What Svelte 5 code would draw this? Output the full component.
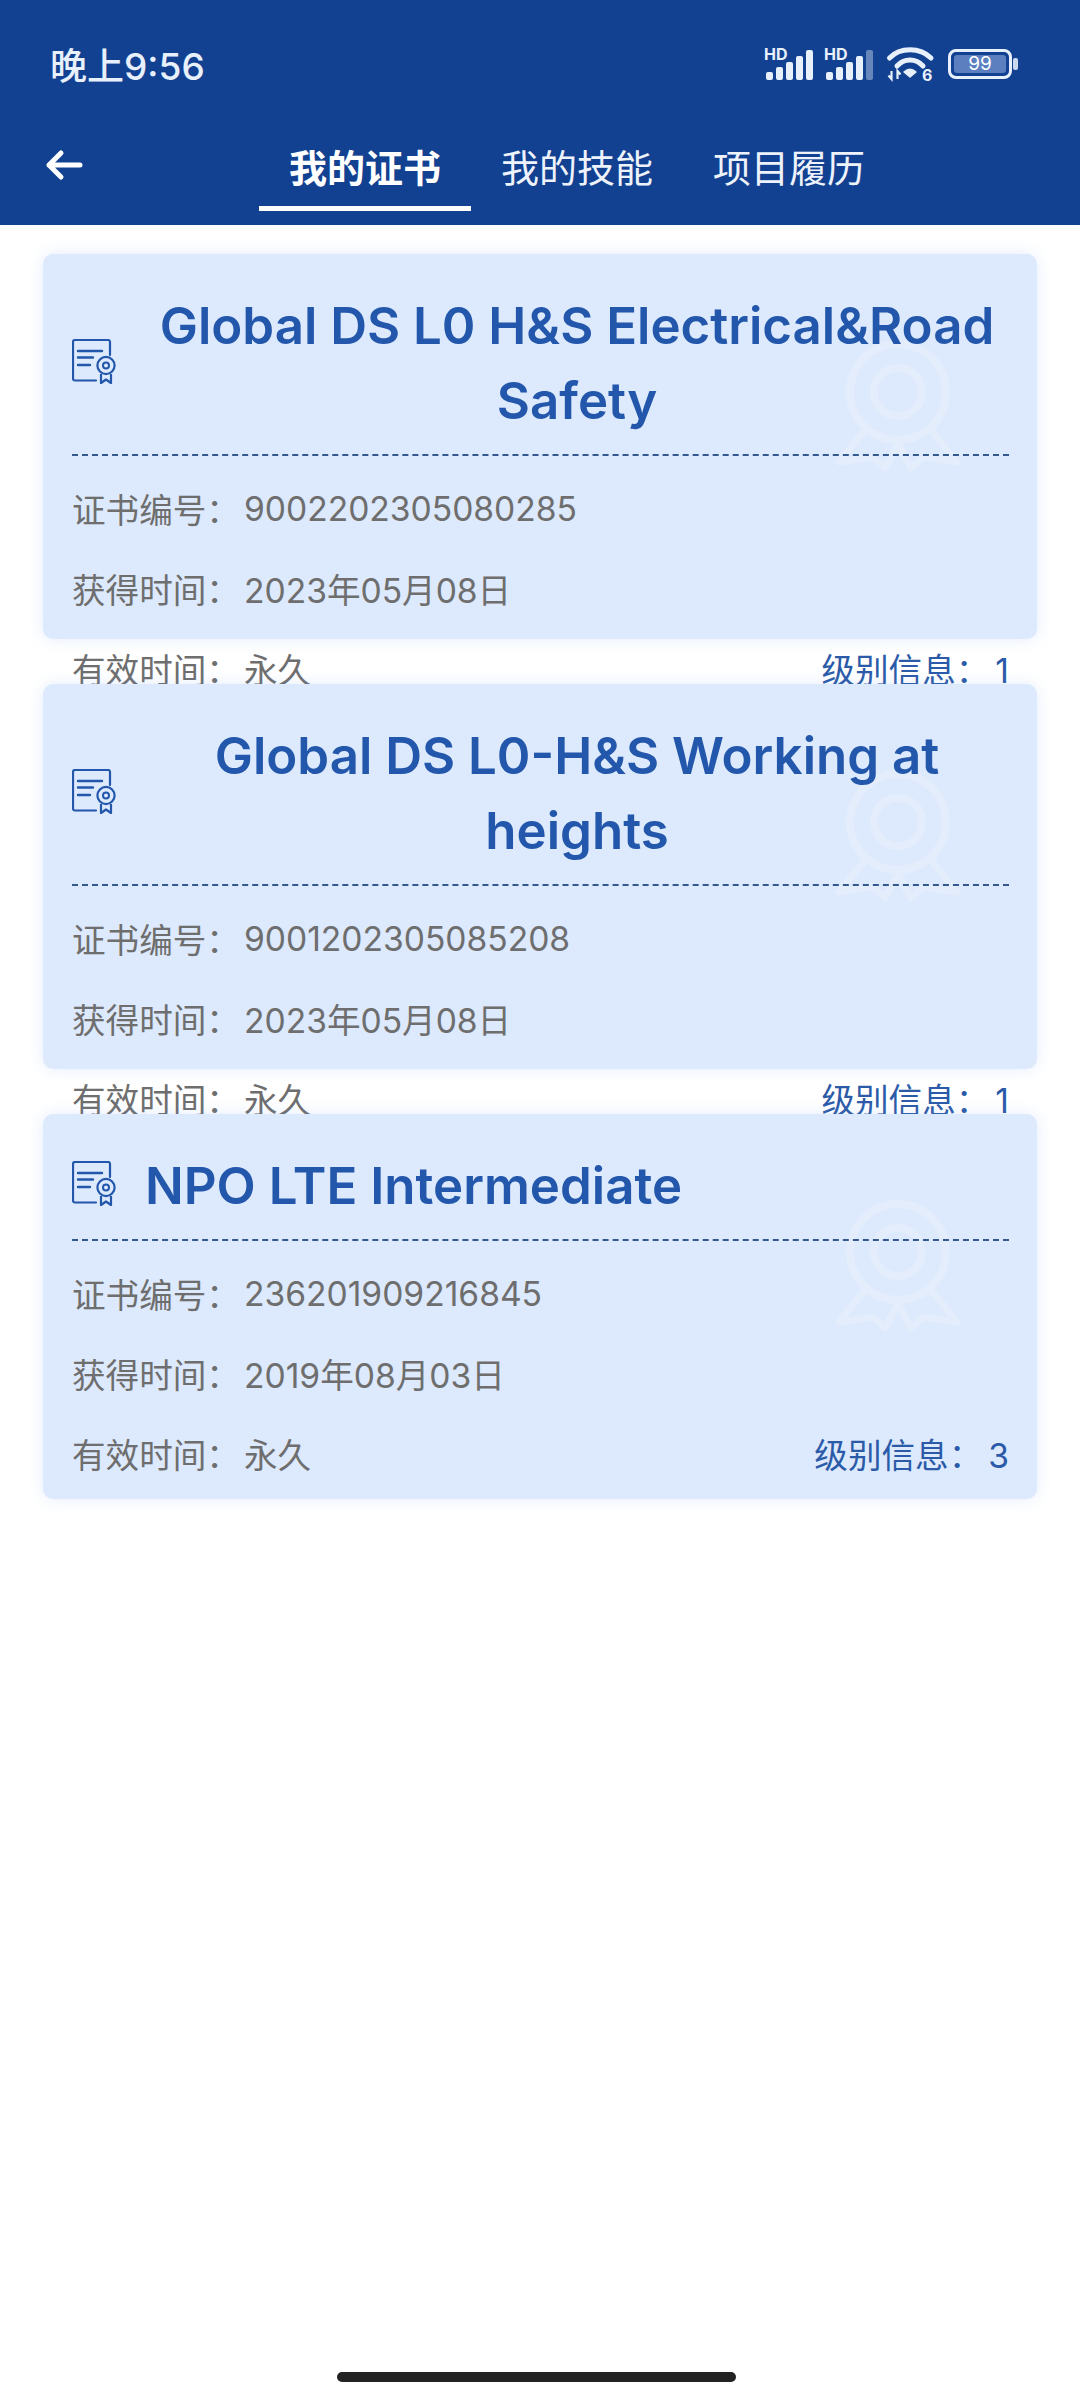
<script>
  const tabs = ['我的证书', '我的技能', '项目履历'];
  const certs = [
    { title: 'Global DS L0 H&S Electrical&Road Safety', no: '9002202305080285', date: '2023年05月08日', level: 1 },
    { title: 'Global DS L0-H&S Working at heights', no: '9001202305085208', date: '2023年05月08日', level: 1 },
    { title: 'NPO LTE Intermediate', no: '236201909216845', date: '2019年08月03日', level: 3 }
  ];
  // signal bar heights, left to right
  const bars = [8, 13, 18, 24, 30];
</script>

{#snippet signal(dimLast)}
  <svg class="signal" width="50" height="32" viewBox="0 0 50 32">
    <text x="0" y="12" class="hd">HD</text>
    {#each bars as h, i}
      <rect
        x={2 + i * 10}
        y={32 - h}
        width="7"
        height={h}
        rx="2"
        fill="#e8f0fc"
        opacity={dimLast && i === 4 ? 0.4 : 1}
      />
    {/each}
  </svg>
{/snippet}

<div class="page">
  <header class="header">
    <div class="status">
      <span class="time">晚上9:56</span>
      <div class="status-icons">
        {@render signal(false)}
        {@render signal(true)}
        <svg width="47" height="36" viewBox="0 0 47 36" class="wifi">
          <path d="M2.5 12 C13 1 33 1 44 12" fill="none" stroke="#e8f0fc" stroke-width="5" stroke-linecap="round" />
          <path d="M10 20 C17 12 29 12 36 20" fill="none" stroke="#e8f0fc" stroke-width="5" stroke-linecap="round" />
          <path d="M17 26 C21 22.5 25 22.5 29 26 L23 31 Z" fill="#e8f0fc" stroke="#e8f0fc" stroke-width="1.5" stroke-linejoin="round" />
          <path d="M4.5 25 V33 M1.5 29.5 L4.5 33 V25 M10.5 33 V25 L13.5 28.5" fill="none" stroke="#e8f0fc" stroke-width="2.2" />
          <text x="35" y="35" class="six">6</text>
        </svg>
        <div class="battery">
          <div class="battery-body"><span>99</span></div>
          <div class="battery-tip"></div>
        </div>
      </div>
    </div>
    <nav class="nav">
      <svg class="back" width="38" height="32" viewBox="0 0 38 32">
        <path d="M35 16 H4 M16 4 L4 16 L16 28" fill="none" stroke="#fff" stroke-width="5" stroke-linecap="round" stroke-linejoin="round" />
      </svg>
      <div class="tabs">
        {#each tabs as tab, i}
          <div class="tab" class:active={i === 0}>{tab}</div>
        {/each}
      </div>
    </nav>
  </header>

  <main class="list">
    {#each certs as cert}
      <section class="card">
        <svg class="seal" width="130" height="140" viewBox="0 0 130 140">
          <circle cx="65" cy="60" r="48" fill="none" stroke="#fff" stroke-width="8" />
          <circle cx="65" cy="60" r="24" fill="none" stroke="#fff" stroke-width="8" />
          <path d="M32 98 L6 130 L40 125 L52 136 L65 112 L78 136 L90 125 L124 130 L98 98" fill="none" stroke="#fff" stroke-width="7" stroke-linejoin="round" />
        </svg>
        <div class="card-head">
          <svg class="cert-icon" width="44" height="45" viewBox="0 0 44 45">
            <path d="M24 41.5 H3 Q1 41.5 1 39.5 V3 Q1 1 3 1 H36 Q38 1 38 3 V16" fill="none" stroke="#2257ab" stroke-width="2.2" stroke-linecap="round" />
            <path d="M6 12 H30 M6 18.5 H21 M6 26 H18" fill="none" stroke="#2257ab" stroke-width="2.4" stroke-linecap="round" />
            <circle cx="34" cy="26.5" r="8.6" fill="none" stroke="#2257ab" stroke-width="2.2" />
            <circle cx="34" cy="26.5" r="3" fill="none" stroke="#2257ab" stroke-width="2" />
            <path d="M29 35 V44 L34 40.5 L39 44 V35" fill="none" stroke="#2257ab" stroke-width="2.2" stroke-linejoin="round" />
          </svg>
          <h2 class="title">{cert.title}</h2>
        </div>
        <div class="rows">
          <div class="row"><span class="label">证书编号：</span><span>{cert.no}</span></div>
          <div class="row"><span class="label">获得时间：</span><span>{cert.date}</span></div>
          <div class="row">
            <span class="label">有效时间：</span><span>永久</span>
            <span class="level">级别信息：<span class="level-num">{cert.level}</span></span>
          </div>
        </div>
      </section>
    {/each}
  </main>

  <div class="home-bar"></div>
</div>

<style>
  :global(body) {
    margin: 0;
    background: #fff;
  }
  .page {
    position: relative;
    width: 1080px;
    height: 2400px;
    overflow: hidden;
    background: #fff;
    font-family: Inter, "Noto Sans CJK SC", sans-serif;
  }
  /* Header */
  .header {
    height: 225px;
    background: #124192;
    color: #fff;
  }
  .status {
    height: 127px;
    display: flex;
    align-items: center;
    justify-content: space-between;
    padding: 0 62px 0 50px;
  }
  .time {
    font-size: 37px;
    font-weight: 500;
    color: #e8f0fc;
  }
  .status-icons {
    display: flex;
    align-items: center;
  }
  .signal {
    margin-right: 10px;
    overflow: visible;
  }
  .hd {
    font-size: 16px;
    font-weight: 700;
    fill: #e8f0fc;
  }
  .wifi {
    margin-left: 3px;
    overflow: visible;
  }
  .six {
    font-size: 16px;
    font-weight: 700;
    fill: #e8f0fc;
  }
  .battery {
    display: flex;
    align-items: center;
    gap: 1px;
    margin-left: 14px;
  }
  .battery-body {
    width: 64px;
    height: 30px;
    box-sizing: border-box;
    border: 3px solid #e8f0fc;
    border-radius: 8px;
    padding: 3px;
    display: flex;
  }
  .battery-body span {
    flex: 1;
    background: #5b7fbf;
    border-radius: 3px;
    color: #fff;
    font-size: 19px;
    line-height: 18px;
    text-align: center;
  }
  .battery-tip {
    width: 5px;
    height: 12px;
    background: #c9d8f0;
    border-radius: 2px;
  }
  .nav {
    height: 98px;
    display: flex;
    align-items: flex-start;
    padding-left: 45px;
  }
  .back {
    margin-top: 22px;
  }
  .tabs {
    display: flex;
    margin-left: 176px;
  }
  .tab {
    width: 212px;
    height: 84px;
    box-sizing: border-box;
    text-align: center;
    font-size: 38px;
    line-height: 82px;
    color: #eef3fb;
  }
  .tab.active {
    font-weight: 700;
    color: #fff;
    border-bottom: 5px solid #fff;
  }
  /* Cards */
  .list {
    display: flex;
    flex-direction: column;
    gap: 45px;
    padding: 29px 43px;
  }
  .card {
    position: relative;
    height: 385px;
    background: #dde9fc;
    border-radius: 10px;
    box-shadow: 0 0 16px rgba(120, 160, 230, 0.2);
    padding: 34px 28px 0 29px;
    box-sizing: border-box;
  }
  .seal {
    position: absolute;
    right: 74px;
    top: 78px;
    opacity: 0.2;
  }
  .card-head {
    position: relative;
    display: flex;
    align-items: center;
    gap: 29px;
    padding-bottom: 16px;
    border-bottom: 2px dashed #33598f;
  }
  .cert-icon {
    flex: none;
    margin-bottom: 4px;
  }
  .title {
    margin: 0;
    font-size: 51px;
    line-height: 75px;
    font-weight: 600;
    color: #2257ab;
    text-align: center;
  }
  .rows {
    position: relative;
    padding-top: 12px;
  }
  .row {
    display: flex;
    align-items: center;
    height: 80px;
    font-size: 33.6px;
    color: #6e6e6e;
    white-space: nowrap;
  }
  .label {
    width: 172px;
    flex: none;
  }
  .level {
    margin-left: auto;
    color: #2b5ba8;
  }
  .level-num {
    margin-left: 6px;
  }
  .home-bar {
    position: absolute;
    left: 337px;
    top: 2372px;
    width: 399px;
    height: 10px;
    border-radius: 5px;
    background: #222;
  }
</style>
